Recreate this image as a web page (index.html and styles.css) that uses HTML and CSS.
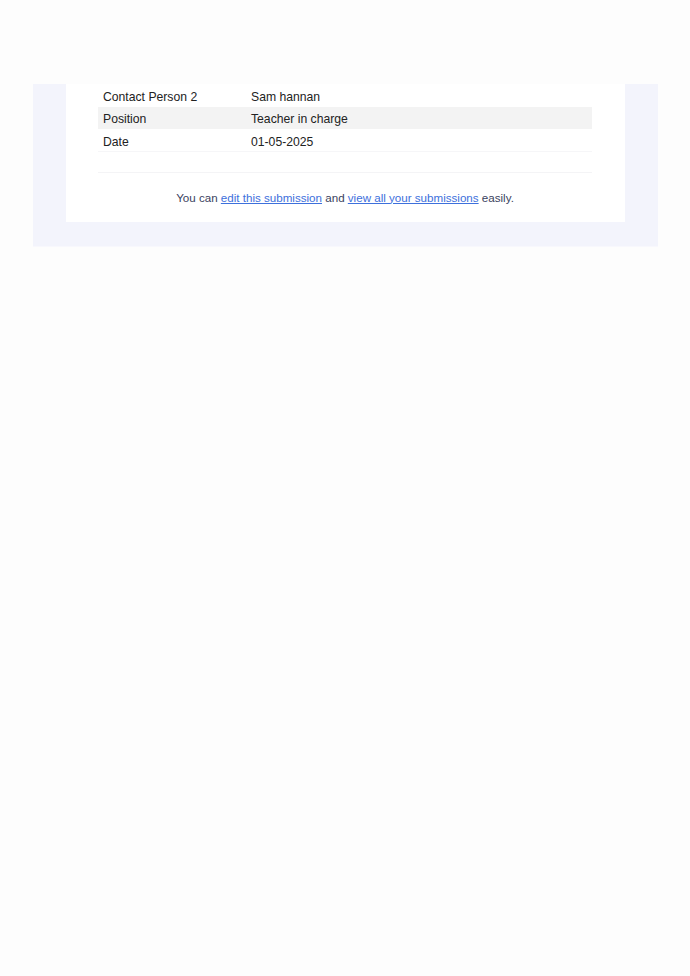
FILE: index.html
```html
<!DOCTYPE html>
<html>
<head>
<meta charset="utf-8">
<link rel="stylesheet" href="styles.css">
</head>
<body>
<div class="outer">
  <div class="card">
    <div class="table">
      <div class="row"><div class="label">Contact Person 2</div><div class="value">Sam hannan</div></div>
      <div class="row alt"><div class="label">Position</div><div class="value">Teacher in charge</div></div>
      <div class="row last"><div class="label">Date</div><div class="value">01-05-2025</div></div>
    </div>
    <div class="spacer"></div>
    <div class="footer"><span>You can <a href="#">edit this submission</a> and <a href="#">view all your submissions</a> easily.</span></div>
  </div>
</div>
</body>
</html>
```

FILE: styles.css
```css
html, body {
  margin: 0;
  padding: 0;
  background: #fdfdfd;
  font-family: "Liberation Sans", Arial, sans-serif;
}
.outer {
  margin: 84px 0 0 33px;
  width: 559px;
  padding: 0 33px 24px 33px;
  background: #f3f4fc;
  border-bottom: 1px solid #f8f8fd;
}
.card {
  background: #ffffff;
  padding: 1px 33px 0 32px;
}
.table {
  display: flex;
  flex-direction: column;
  border-bottom: 1px solid #f6f6f8;
}
.row {
  display: flex;
  height: 22px;
  align-items: center;
  font-size: 12.2px;
  color: #222222;
  padding-top: 1px;
  box-sizing: border-box;
}
.row.alt {
  background: #f3f3f3;
}
.row.last {
  height: 22px;
  padding-top: 3px;
}
.label {
  width: 143px;
  padding-left: 5px;
}
.value {
  padding-left: 5px;
}
.spacer {
  height: 20px;
  border-bottom: 1px solid #f4f4f6;
}
.footer {
  height: 49px;
  display: flex;
  align-items: center;
  justify-content: center;
  font-size: 11.6px;
  color: #3a3f5e;
  padding-bottom: 1px;
  box-sizing: border-box;
}
.footer a {
  color: #3d70dc;
  text-decoration: underline;
}
```
